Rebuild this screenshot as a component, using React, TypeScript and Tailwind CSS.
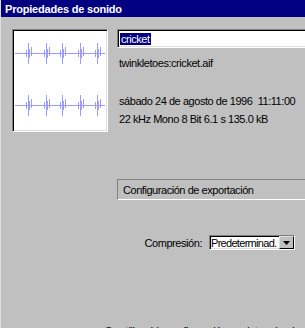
import React from "react";

const bursts = [15, 33, 49, 67, 84];

const Waveform = ({ y }: { y: number }) => (
  <g stroke="#9c9cff" strokeWidth="1" fill="none" shapeRendering="crispEdges">
    <line x1="2" y1={y + 0.5} x2="92" y2={y + 0.5} />
    {bursts.map((c, i) => (
      <g key={i}>
        <line x1={c - 1.5} y1={y - 3} x2={c - 1.5} y2={y + 4} />
        <line x1={c + 0.5} y1={y - 10} x2={c + 0.5} y2={y + 11} />
        <line x1={c + 1.5} y1={y - 4} x2={c + 1.5} y2={y + 5} />
        <line x1={c + 3.5} y1={y - 6} x2={c + 3.5} y2={y + 3} />
      </g>
    ))}
  </g>
);

const App = () => {
  return (
    <div
      className="w-[305px] h-[328px] overflow-hidden bg-[#c0c0c0] border-l border-[#dfdfdf] text-[11px] leading-[14px] text-black tracking-[-0.45px]"
      style={{ fontFamily: '"Liberation Sans", Arial, sans-serif' }}
    >
      <div className="h-[17px] bg-[#000080] pl-[4px] flex items-center text-white font-bold tracking-[-0.2px]">
        Propiedades de sonido
      </div>

      <div className="flex">
        <div className="ml-[11px] mt-[12px] w-[96px] h-[103px] bg-white border border-t-[#808080] border-l-[#808080] border-b-white border-r-white shadow-[inset_1px_1px_0_#000,inset_-1px_-1px_0_#dfdfdf]">
          <svg width="94" height="101" viewBox="0 0 94 101">
            <Waveform y={23} />
            <Waveform y={75} />
          </svg>
        </div>

        <div className="ml-[9px] flex-1 pt-[12px] flex flex-col">
          <div className="h-[19px] bg-white border border-t-[#808080] border-l-[#808080] border-b-white border-r-0 shadow-[inset_1px_1px_0_#000,inset_0_-1px_0_#dfdfdf] flex items-center pl-[2px]">
            <span className="bg-[#000080] text-white px-[1px] leading-[12px]">cricket</span>
          </div>

          <div className="mt-[8px] pl-[2px]">twinkletoes:cricket.aif</div>

          <div className="mt-[24px] pl-[2px] whitespace-pre">sábado 24 de agosto de 1996  11:11:00</div>
          <div className="mt-[4px] pl-[2px]">22 kHz Mono 8 Bit 6.1 s 135.0 kB</div>

          <div className="mt-[53px] h-[21px] border-t border-l border-b border-t-[#808080] border-l-[#808080] border-b-white flex items-center pl-[5px]">
            Configuración de exportación
          </div>

          <div className="mt-[35px] flex items-center">
            <span className="w-[85px] text-right whitespace-nowrap">Compresión:</span>
            <div className="ml-[7px] w-[86px] h-[15px] bg-white border border-t-[#808080] border-l-[#808080] border-b-white border-r-white shadow-[inset_1px_1px_0_#000,inset_-1px_-1px_0_#dfdfdf] flex items-center">
              <span className="pl-[1px] flex-1 overflow-hidden whitespace-nowrap leading-[12px] tracking-[-0.7px]">Predeterminad.</span>
              <div className="w-[15px] h-[13px] bg-[#c0c0c0] border border-t-[#dfdfdf] border-l-[#dfdfdf] border-b-black border-r-black flex items-center justify-center">
                <svg width="7" height="4" viewBox="0 0 7 4">
                  <path d="M0 0H7L3.5 4Z" fill="#000" />
                </svg>
              </div>
            </div>
          </div>
        </div>
      </div>

      <div className="mt-[74px] pl-[104px] whitespace-nowrap">
        Se utilizará la configuración predeterminada
      </div>
    </div>
  );
};

export default App;
